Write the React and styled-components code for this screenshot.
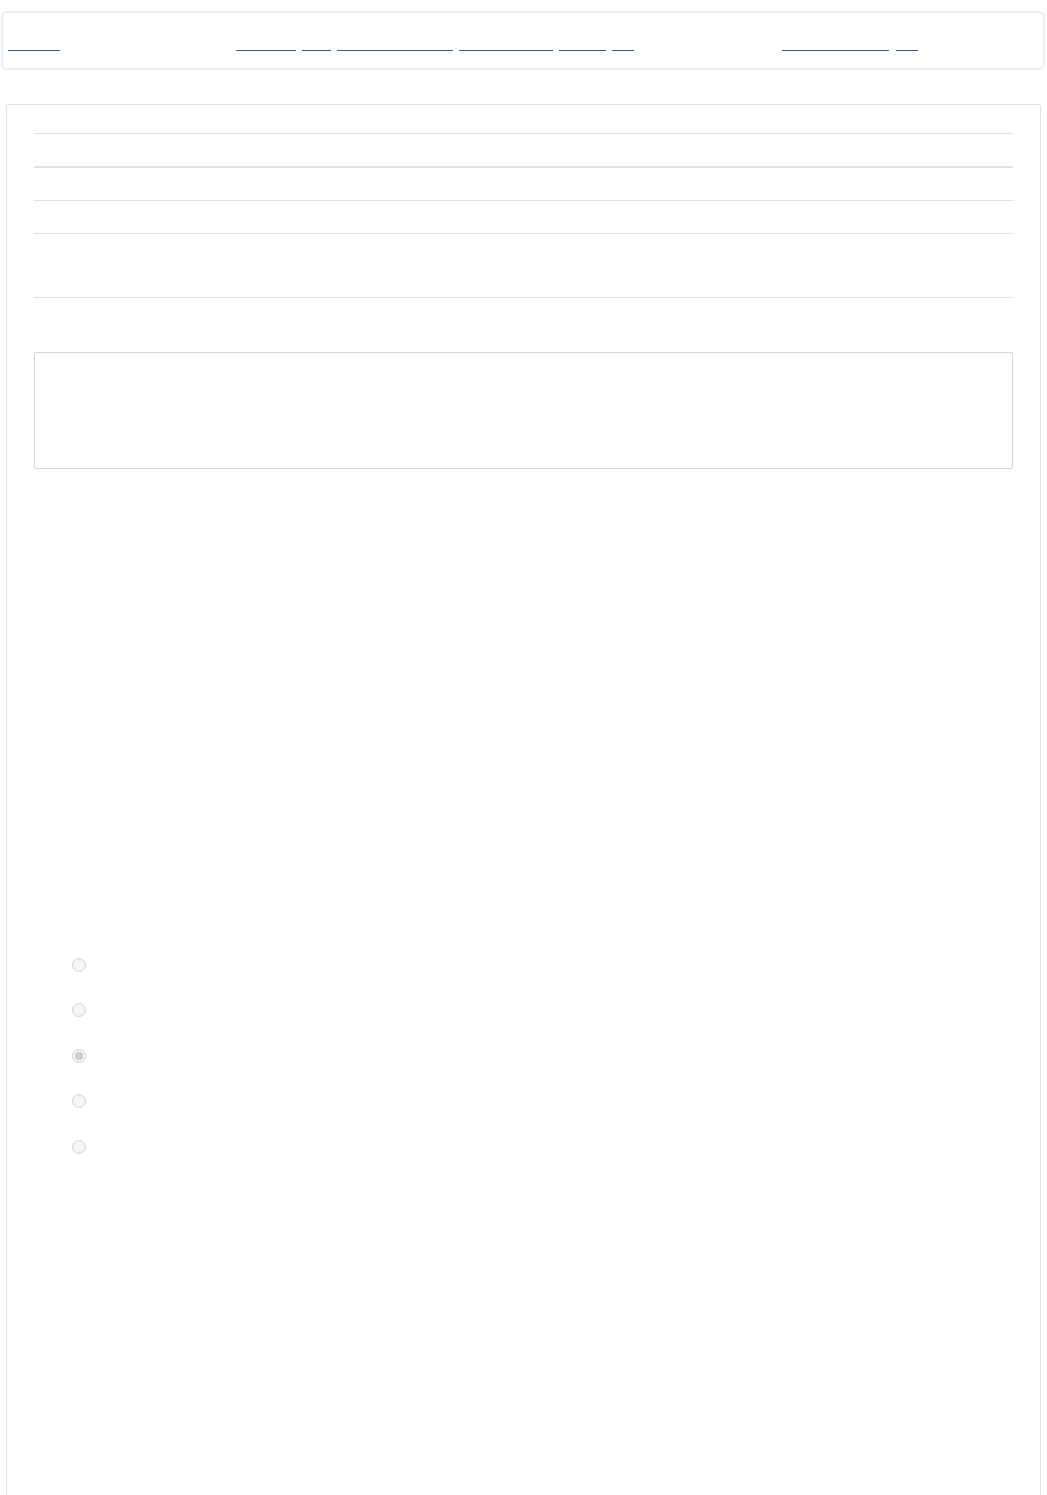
import React from "react";
import styled, { createGlobalStyle } from "styled-components";

const Global = createGlobalStyle`
  html, body { margin: 0; padding: 0; background: #fff; }
  body { font-family: "Liberation Sans", Arial, sans-serif; font-size: 14px; color: transparent; }
  * { box-sizing: border-box; }
`;

const Header = styled.header`
  margin: 11px 2px 0 1px;
  height: 59px;
  border: 2px solid #e9edf1;
  border-radius: 6px;
  padding: 0 5px;
  display: flex;
  align-items: center;
`;

const Group = styled.nav`
  display: flex;
  align-items: center;
  gap: ${(p) => p.$gap || 6}px;
  margin-left: ${(p) => p.$offset || 0}px;
`;

const NavLink = styled.a`
  display: inline-block;
  width: ${(p) => p.$w}px;
  height: 20px;
  border-bottom: 1px solid #1b5fb1;
  color: transparent;
  text-decoration: none;
  white-space: nowrap;
  font-size: 9px;
  line-height: 19px;
`;

const Panel = styled.main`
  margin: 34px 6px 0 6px;
  min-height: 1500px;
  border: 1px solid #dfe1e4;
  border-radius: 3px;
  padding: 28px 27px;
`;

const Table = styled.div`
  display: flex;
  flex-direction: column;
`;

const HeadRow = styled.div`
  height: 35px;
  border-top: 1px solid #dee2e6;
  border-bottom: 2px solid #dee2e6;
  display: flex;
  align-items: center;
  font-weight: bold;
`;

const Row = styled.div`
  height: ${(p) => p.$h}px;
  border-top: ${(p) => (p.$top ? "1px solid #dee2e6" : "none")};
  border-bottom: ${(p) => (p.$bottom ? "1px solid #dee2e6" : "none")};
  display: flex;
  align-items: center;
`;

const Cell = styled.div`
  flex: ${(p) => p.$flex || 1};
  padding: 0 12px;
`;

const TextBox = styled.textarea`
  display: block;
  width: 100%;
  height: 117px;
  margin-top: 54px;
  border: 1px solid #d3d6da;
  border-radius: 2px;
  resize: none;
  font: inherit;
  color: transparent;
  background: #fff;
`;

const Options = styled.fieldset`
  border: none;
  margin: 473px 0 0 0;
  padding: 0 0 0 38px;
  min-width: 0;
`;

const Option = styled.label`
  display: flex;
  align-items: center;
  height: 45.5px;
  gap: 8px;
  line-height: 18px;
`;

const Radio = styled.input`
  appearance: none;
  width: 14px;
  height: 14px;
  margin: 0;
  border: 1px solid #d4d4d4;
  border-radius: 50%;
  background: #f5f5f5;
  display: grid;
  place-items: center;
  &:checked::after {
    content: "";
    width: 8px;
    height: 8px;
    border-radius: 50%;
    background: #cdcdcd;
  }
`;

const options = ["Option one", "Option two", "Option three", "Option four", "Option five"];

export default function App() {
  return (
    <>
      <Global />
      <Header>
        <Group>
          <NavLink href="#" $w={52}>Home</NavLink>
        </Group>
        <Group $offset={176}>
          <NavLink href="#" $w={60}>Products</NavLink>
          <NavLink href="#" $w={29}>FAQ</NavLink>
          <NavLink href="#" $w={116}>Documentation</NavLink>
          <NavLink href="#" $w={94}>Downloads</NavLink>
          <NavLink href="#" $w={47}>Blog</NavLink>
          <NavLink href="#" $w={22}>Help</NavLink>
        </Group>
        <Group $offset={148} $gap={7}>
          <NavLink href="#" $w={107}>My account</NavLink>
          <NavLink href="#" $w={22}>Exit</NavLink>
        </Group>
      </Header>
      <Panel>
        <Table>
          <HeadRow>
            <Cell>Name</Cell>
            <Cell>Value</Cell>
          </HeadRow>
          <Row $h={32}>
            <Cell>Item</Cell>
            <Cell>1</Cell>
          </Row>
          <Row $h={33} $top>
            <Cell>Item</Cell>
            <Cell>2</Cell>
          </Row>
          <Row $h={65} $top $bottom>
            <Cell>Item</Cell>
            <Cell>3</Cell>
          </Row>
        </Table>
        <TextBox aria-label="Comment" defaultValue="" />
        <Options disabled aria-label="Choice">
          {options.map((o, i) => (
            <Option key={o}>
              <Radio type="radio" name="choice" defaultChecked={i === 2} />
              {o}
            </Option>
          ))}
        </Options>
      </Panel>
    </>
  );
}
